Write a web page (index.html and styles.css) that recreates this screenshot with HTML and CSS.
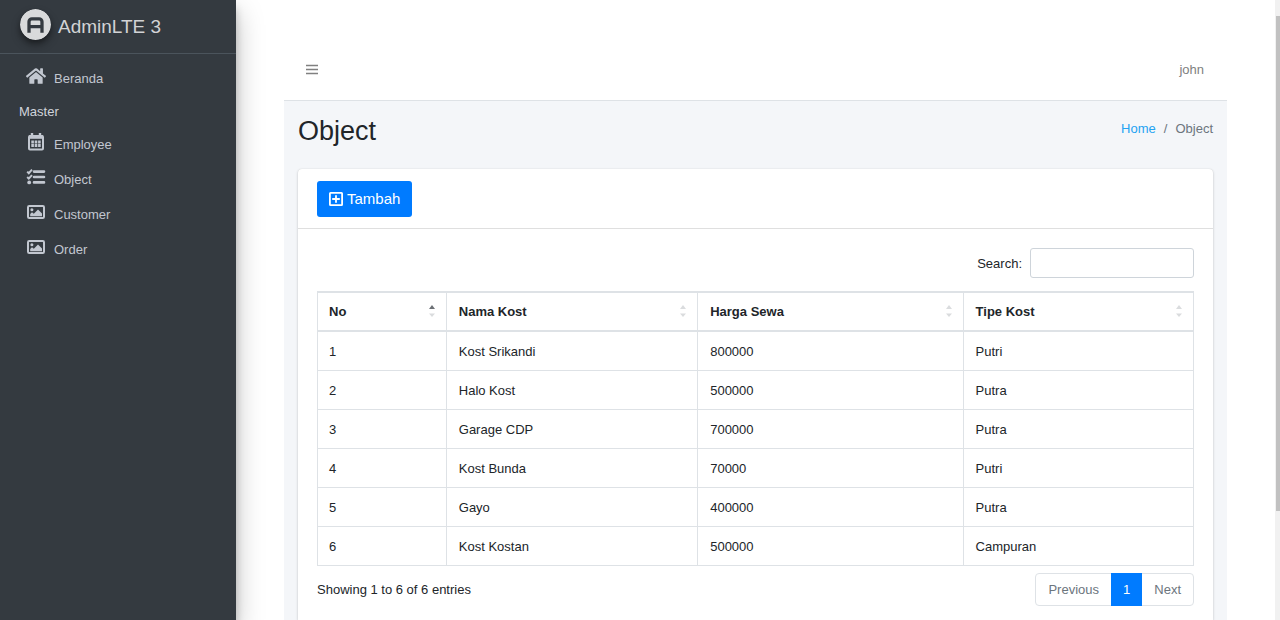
FILE: index.html
```html
<!DOCTYPE html>
<html lang="id">
<head>
<meta charset="utf-8">
<meta name="viewport" content="width=device-width, initial-scale=1">
<title>AdminLTE 3 | Object</title>
<link rel="stylesheet" href="styles.css">
</head>
<body>
<svg class="sprite" aria-hidden="true">
  <symbol id="picture" viewBox="0 0 18 14">
    <rect x="1" y="1" width="16" height="12" rx="1.2" fill="none" stroke="currentColor" stroke-width="2"/>
    <circle cx="4.9" cy="4.7" r="1.5" fill="currentColor"/>
    <path d="M3.2 11.200V9l1.800-1.800L6.800 8.800l4.200-4.300 4 3.900v2.800z" fill="currentColor"/>
  </symbol>
</svg>
<div class="layout">
  <aside class="sidebar">
    <a class="brand" href="#">
      <svg class="brand-logo" viewBox="0 0 32 32" aria-hidden="true">
        <circle cx="16" cy="16" r="16" fill="#d9dadb"/>
        <path d="M9.300 24.500V13.200a3 3 0 0 1 3-3h7.400a3 3 0 0 1 3 3V24.500M9.300 18.200h13.400" fill="none" stroke="#343a40" stroke-width="3.400"/>
      </svg>
      <span>AdminLTE 3</span>
    </a>
    <nav class="menu">
      <a class="menu-item" href="#">
        <svg class="menu-icon" viewBox="0 0 576 512" aria-hidden="true"><path fill="currentColor" d="M280.37 148.26L96 300.11V464a16 16 0 0 0 16 16l112.06-.29a16 16 0 0 0 15.92-16V368a16 16 0 0 1 16-16h64a16 16 0 0 1 16 16v95.64a16 16 0 0 0 16 16.05L464 480a16 16 0 0 0 16-16V300L295.67 148.26a12.19 12.19 0 0 0-15.3 0zM571.6 251.47L488 182.56V44.05a12 12 0 0 0-12-12h-56a12 12 0 0 0-12 12v72.61L318.47 43a48 48 0 0 0-61 0L4.34 251.47a12 12 0 0 0-1.6 16.9l25.5 31A12 12 0 0 0 45.15 301l235.22-193.74a12.19 12.19 0 0 1 15.3 0L530.9 301a12 12 0 0 0 16.9-1.6l25.5-31a12 12 0 0 0-1.7-16.93z"/></svg>
        <span>Beranda</span>
      </a>
      <div class="menu-header">Master</div>
      <a class="menu-item" href="#">
        <svg class="menu-icon" viewBox="0 0 20 18" aria-hidden="true">
          <path d="M6 0v4M14 0v4" stroke="currentColor" stroke-width="2.4"/>
          <rect x="3" y="3" width="14" height="13.400" rx="1" fill="none" stroke="currentColor" stroke-width="2"/>
          <path d="M3 4h14" stroke="currentColor" stroke-width="3.600"/>
          <path d="M5.300 9h9.400M5.300 12.500h9.400" stroke="currentColor" stroke-width="2.800" stroke-dasharray="2.600 .8"/>
        </svg>
        <span>Employee</span>
      </a>
      <a class="menu-item" href="#">
        <svg class="menu-icon" viewBox="0 0 20 18" aria-hidden="true">
          <path d="M8 3.600h10M8 9h10M8 14.400h10" stroke="currentColor" stroke-width="2.600" stroke-linecap="round"/>
          <path d="M1.200 3.600l1.600 1.600 3.200-3.500M1.200 9l1.600 1.600 3.200-3.500" fill="none" stroke="currentColor" stroke-width="2"/>
          <circle cx="3.200" cy="14.400" r="1.900" fill="currentColor"/>
        </svg>
        <span>Object</span>
      </a>
      <a class="menu-item" href="#">
        <svg class="menu-icon menu-picture" aria-hidden="true"><use href="#picture"/></svg>
        <span>Customer</span>
      </a>
      <a class="menu-item" href="#">
        <svg class="menu-icon menu-picture" aria-hidden="true"><use href="#picture"/></svg>
        <span>Order</span>
      </a>
    </nav>
  </aside>

  <div class="page">
    <header class="navbar">
      <button class="toggle" type="button" aria-label="Menu">
        <svg viewBox="0 0 12 12" aria-hidden="true"><path d="M0 1.500h12M0 5.500h12M0 9.500h12" stroke="currentColor" stroke-width="1.600"/></svg>
      </button>
      <a class="user" href="#">john</a>
    </header>
    <main class="content">
      <div class="content-header">
        <h1>Object</h1>
        <nav class="breadcrumb" aria-label="Breadcrumb">
          <a href="#">Home</a><span>/</span><span>Object</span>
        </nav>
      </div>
      <section class="card">
        <div class="card-header">
          <button class="add" type="button">
            <svg viewBox="0 0 14 14" aria-hidden="true"><rect x=".9" y=".9" width="12.2" height="12.2" rx=".6" fill="none" stroke="currentColor" stroke-width="1.8"/><path d="M7 3.200v7.600M3.200 7h7.600" stroke="currentColor" stroke-width="1.8"/></svg>
            <span>Tambah</span>
          </button>
        </div>
        <div class="card-body">
          <div class="filter">
            <label for="search">Search:</label>
            <input id="search" type="search">
          </div>
          <table class="data">
            <colgroup><col class="c-no"><col class="c-name"><col class="c-price"><col class="c-type"></colgroup>
            <thead>
              <tr>
                <th aria-sort="ascending"><div class="head">No<svg class="sort" viewBox="0 0 6 14" aria-hidden="true"><path class="up" d="M0 4l3-4 3 4z"/><path d="M0 8.500h6l-3 3.500z"/></svg></div></th>
                <th><div class="head">Nama Kost<svg class="sort" viewBox="0 0 6 14" aria-hidden="true"><path d="M0 4l3-4 3 4z"/><path d="M0 8.500h6l-3 3.500z"/></svg></div></th>
                <th><div class="head">Harga Sewa<svg class="sort" viewBox="0 0 6 14" aria-hidden="true"><path d="M0 4l3-4 3 4z"/><path d="M0 8.500h6l-3 3.500z"/></svg></div></th>
                <th><div class="head">Tipe Kost<svg class="sort" viewBox="0 0 6 14" aria-hidden="true"><path d="M0 4l3-4 3 4z"/><path d="M0 8.500h6l-3 3.500z"/></svg></div></th>
              </tr>
            </thead>
            <tbody>
              <tr><td>1</td><td>Kost Srikandi</td><td>800000</td><td>Putri</td></tr>
              <tr><td>2</td><td>Halo Kost</td><td>500000</td><td>Putra</td></tr>
              <tr><td>3</td><td>Garage CDP</td><td>700000</td><td>Putra</td></tr>
              <tr><td>4</td><td>Kost Bunda</td><td>70000</td><td>Putri</td></tr>
              <tr><td>5</td><td>Gayo</td><td>400000</td><td>Putra</td></tr>
              <tr><td>6</td><td>Kost Kostan</td><td>500000</td><td>Campuran</td></tr>
            </tbody>
          </table>
          <div class="table-footer">
            <div>Showing 1 to 6 of 6 entries</div>
            <nav class="pagination" aria-label="Pagination">
              <a href="#">Previous</a><a class="current" href="#" aria-current="page">1</a><a href="#">Next</a>
            </nav>
          </div>
        </div>
      </section>
    </main>
  </div>
  <div class="scrollbar" aria-hidden="true"><div class="thumb"></div></div>
</div>
</body>
</html>
```

FILE: styles.css
```css
* { box-sizing: border-box; }

body {
  margin: 0;
  background: #fff;
  color: #212529;
  font: 13px/19px "Liberation Sans", Arial, sans-serif;
}

a { color: inherit; text-decoration: none; }
svg { display: block; flex: none; }
.sprite { position: absolute; width: 0; height: 0; }

.layout {
  display: grid;
  grid-template-columns: 236px minmax(0, 1fr) 5px;
  min-height: 100vh;
}

/* Sidebar */
.sidebar {
  background: #343a40;
  color: #c2c7d0;
  box-shadow: 0 12px 26px rgba(0, 0, 0, .25), 0 8px 8px rgba(0, 0, 0, .2);
}

.brand {
  display: flex;
  align-items: center;
  gap: 7px;
  height: 54px;
  padding: 0 20px;
  border-bottom: 1px solid #4b545c;
  color: #d2d3d5;
  font-size: 19px;
  line-height: 28px;
}

.brand-logo {
  width: 31px;
  height: 31px;
  margin-bottom: 4px;
  border-radius: 50%;
  box-shadow: 0 5px 10px rgba(0, 0, 0, .3), 0 3px 4px rgba(0, 0, 0, .25);
}

.menu { padding-top: 6px; }

.menu-item {
  display: flex;
  align-items: center;
  gap: 8px;
  height: 35px;
  padding: 1px 26px 0;
}

.menu-icon { width: 20px; height: 18px; margin-bottom: 4px; }
.menu-picture { height: 14px; }

.menu-header {
  padding: 7px 19px 5px;
  color: #d0d4db;
}

/* Page */
.page {
  display: flex;
  flex-direction: column;
  min-width: 0;
  padding: 40px 48px 0;
}

.navbar {
  display: flex;
  flex: none;
  align-items: center;
  justify-content: space-between;
  height: 61px;
  padding: 0 23px 1px 22px;
  border-bottom: 1px solid #dee2e6;
  color: #808080;
}

.toggle {
  padding: 0;
  border: 0;
  background: none;
  color: inherit;
}

.toggle svg { width: 12px; height: 12px; }

.content {
  display: flex;
  flex: 1;
  flex-direction: column;
  padding: 13px 14px 0;
  background: #f4f6f9;
}

.content-header {
  display: flex;
  align-items: flex-start;
  justify-content: space-between;
  height: 55px;
}

h1 {
  margin: 0;
  font-size: 27px;
  font-weight: 400;
  line-height: 34px;
}

.breadcrumb {
  display: flex;
  gap: 8px;
  padding-top: 5px;
  color: #6c757d;
}

.breadcrumb a { color: #24a3f2; }

/* Card */
.card {
  flex: 1;
  border-radius: 4px 4px 0 0;
  background: #fff;
  box-shadow: 0 0 1px rgba(0, 0, 0, .15), 0 1px 3px rgba(0, 0, 0, .18);
}

.card-header {
  padding: 12px 19px 11px;
  border-bottom: 1px solid #dfdfdf;
}

.add {
  display: flex;
  align-items: center;
  gap: 4px;
  height: 36px;
  padding: 0 12px;
  border: 0;
  border-radius: 3px;
  background: #007bff;
  color: #fff;
  font: 15px/22px "Liberation Sans", Arial, sans-serif;
}

.add svg { width: 14px; height: 14px; }

.card-body { padding: 19px 19px 14px; }

.filter {
  display: flex;
  align-items: center;
  justify-content: flex-end;
  gap: 8px;
  margin-bottom: 13px;
}

.filter input {
  width: 164px;
  height: 30px;
  border: 1px solid #ced4da;
  border-radius: 3px;
  background: #fff;
  font: inherit;
}

.data {
  width: 100%;
  table-layout: fixed;
  border-spacing: 0;
  border-left: 1px solid #dee2e6;
}

.c-no { width: 14.7%; }
.c-name { width: 28.7%; }
.c-price { width: 30.3%; }
.c-type { width: 26.3%; }

.data th,
.data td {
  padding: 10px 11px 9px 12px;
  border: solid #dee2e6;
  border-width: 0 1px 1px 0;
  text-align: left;
}

.data td:first-child,
.data th:first-child { padding-left: 11px; }

.data th {
  padding-top: 9px;
  border-width: 2px 1px 2px 0;
}

.head {
  display: flex;
  align-items: center;
  justify-content: space-between;
}

.sort { width: 6px; height: 14px; fill: #dadcde; }
.sort .up { fill: #6c7075; }

.table-footer {
  display: flex;
  align-items: center;
  justify-content: space-between;
  padding-top: 7px;
}

.pagination {
  display: flex;
  border: 1px solid #dee2e6;
  border-radius: 4px;
  color: #6c757d;
}

.pagination a { padding: 6px 12px; }

.pagination .current {
  margin: -1px 0;
  padding: 7px 12px;
  background: #007bff;
  color: #fff;
}

/* Scroll track at the window edge */
.scrollbar { padding: 16px 0 109px 1px; background: #f1f1f1; }
.thumb { height: 100%; background: #c1c1c1; }
```
